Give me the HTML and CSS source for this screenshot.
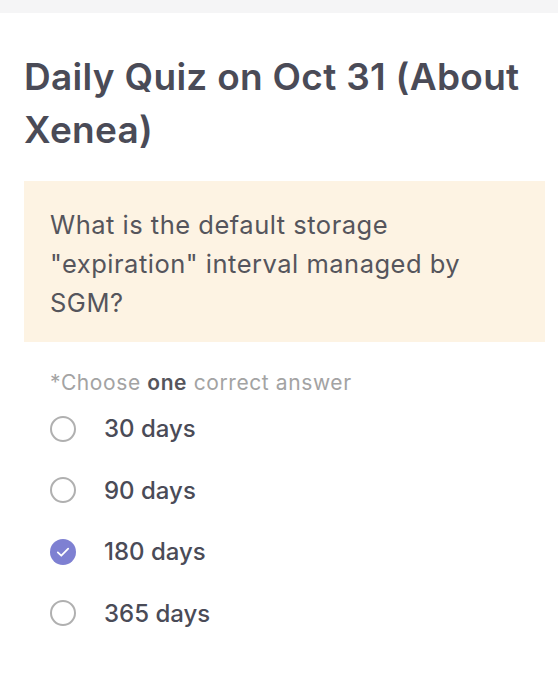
FILE: index.html
```html
<!DOCTYPE html>
<html>
<head>
<meta charset="utf-8">
<link rel="stylesheet" href="styles.css">
</head>
<body>
<div class="topbar"></div>
<main class="quiz">
  <h1 class="title">Daily Quiz on Oct 31 (About Xenea)</h1>
  <div class="question">What is the default storage "expiration" interval managed by SGM?</div>
  <p class="hint">*Choose <b>one</b> correct answer</p>
  <ul class="options">
    <li class="option"><span class="radio"></span><span class="label">30 days</span></li>
    <li class="option"><span class="radio"></span><span class="label">90 days</span></li>
    <li class="option"><span class="radio checked"><svg viewBox="0 0 26 26" width="26" height="26"><path d="M7.8 13.4l3.5 3.3 6.9-7" fill="none" stroke="#fff" stroke-width="1.8" stroke-linecap="round" stroke-linejoin="round"/></svg></span><span class="label">180 days</span></li>
    <li class="option"><span class="radio"></span><span class="label">365 days</span></li>
  </ul>
</main>
</body>
</html>
```

FILE: styles.css
```css
* { box-sizing: border-box; }
html, body { margin: 0; padding: 0; background: #fff; }
body { font-family: Inter, "Noto Sans", sans-serif; color: #4a4b57; }
.topbar { height: 13px; background: #f5f5f6; }
.quiz { padding: 0 13px 0 24px; }
.title {
  margin: 37px 0 0;
  font-size: 37px;
  font-weight: 600;
  line-height: 53px;
  letter-spacing: 0.3px;
  color: #4a4b57;
}
.question {
  margin-top: 25px;
  background: #fdf3e3;
  padding: 24px 30px 20px 26px;
  font-size: 25.5px;
  line-height: 39px;
  letter-spacing: 0.5px;
  color: #55555c;
  font-weight: 400;
}
.hint {
  margin: 28px 0 0 26px;
  font-size: 21px;
  line-height: 26px;
  letter-spacing: 0.6px;
  color: #a3a3a3;
}
.hint b { color: #55555c; font-weight: 600; }
.options { list-style: none; margin: 2px 0 0 26px; padding: 0; }
.option { display: flex; align-items: center; height: 61.5px; }
.radio {
  width: 26px; height: 26px; border-radius: 50%;
  border: 2px solid #b0b0b0;
  flex: none;
  display: flex; align-items: center; justify-content: center;
}
.radio.checked { border: none; background: #7e80d2; }
.label { margin-left: 28px; font-size: 24px; color: #4a4b57; font-weight: 500; }
```
